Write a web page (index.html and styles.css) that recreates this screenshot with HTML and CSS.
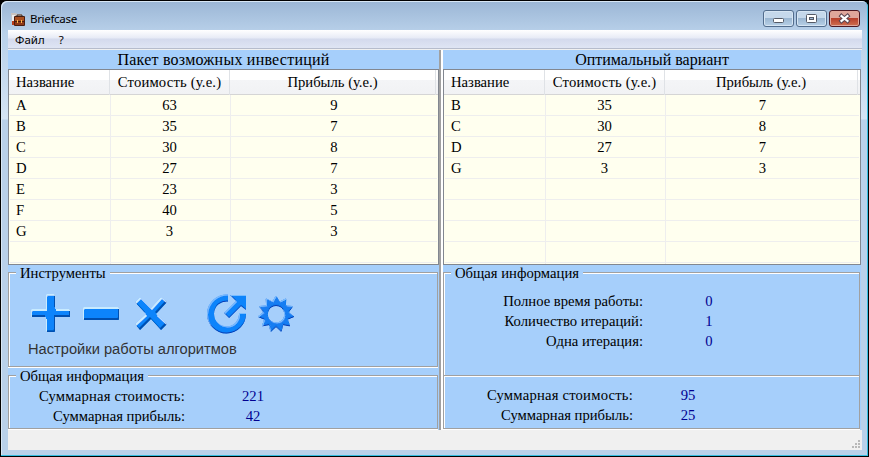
FILE: index.html
```html
<!DOCTYPE html>
<html lang="ru">
<head>
<meta charset="utf-8">
<title>Briefcase</title>
<link rel="stylesheet" href="styles.css">
</head>
<body>
<div class="window">
  <header class="titlebar">
    <svg class="app-icon" width="15" height="15" viewBox="0 0 15 15">
      <path d="M0 1h5l1 1h5v11H1z" fill="#c9c3c0"/><path d="M1 3h3v10H1z" fill="#eee"/><path d="M1 9h3v4H1z" fill="#b83c18"/>
      <rect x="3" y="4" width="11" height="10" rx="1" fill="#4a1d10"/><rect x="4" y="5" width="9" height="4" fill="#a94f20"/>
      <rect x="4" y="10" width="9" height="3" fill="#8e3918"/><path d="M6 5V3h5v2" fill="none" stroke="#352018"/><path d="M6 8h1v3H6zM10 8h1v3h-1z" fill="#ffb64c"/>
    </svg>
    <span class="app-name">Briefcase</span>
    <div class="buttons">
      <span class="button"><svg width="29" height="15" viewBox="0 0 29 15"><rect x="9.5" y="7.5" width="10" height="4" rx="1" fill="#fff" stroke="#555a66"/></svg></span>
      <span class="button"><svg width="29" height="15" viewBox="0 0 29 15"><rect x="9.5" y="3.5" width="10" height="8" rx="1" fill="#fff" stroke="#555a66"/><rect x="12.5" y="6.5" width="4" height="2" fill="#9fb9d6" stroke="#555a66"/></svg></span>
      <span class="button close"><svg width="29" height="15" viewBox="0 0 29 15"><path d="M11.5 5l6 5M17.5 5l-6 5" stroke="#5a4550" stroke-width="4.2" stroke-linecap="square"/><path d="M11.5 5l6 5M17.5 5l-6 5" stroke="#fff" stroke-width="2.2" stroke-linecap="square"/></svg></span>
    </div>
  </header>
  <nav class="menu"><span class="menu-file">Файл</span><span>?</span></nav>
  <main class="panels">
    <section class="panel left">
      <h1 class="caption">Пакет возможных инвестиций</h1>
      <div class="list">
        <div class="row head"><span>Название</span><span>Стоимость (у.е.)</span><span>Прибыль (у.е.)</span></div>
        <div class="row"><span>A</span><span>63</span><span>9</span></div>
        <div class="row"><span>B</span><span>35</span><span>7</span></div>
        <div class="row"><span>C</span><span>30</span><span>8</span></div>
        <div class="row"><span>D</span><span>27</span><span>7</span></div>
        <div class="row"><span>E</span><span>23</span><span>3</span></div>
        <div class="row"><span>F</span><span>40</span><span>5</span></div>
        <div class="row"><span>G</span><span>3</span><span>3</span></div>
        <div class="row"><span></span><span></span><span></span></div>
        <div class="row rest"><span></span><span></span><span></span></div>
      </div>
      <div class="group tools">
        <h2 class="legend">Инструменты</h2>
        <svg class="toolbar" width="275" height="46" viewBox="25 290 275 46">
          <defs>
            <filter id="bevel" x="-20%" y="-20%" width="140%" height="140%">
              <feOffset in="SourceAlpha" dx="0.9" dy="1.7" result="down"/>
              <feComposite in="SourceAlpha" in2="down" operator="out" result="top"/>
              <feFlood flood-color="#c8ebff"/><feComposite in2="top" operator="in" result="light"/>
              <feOffset in="SourceAlpha" dx="-0.9" dy="-1.7" result="up"/>
              <feComposite in="SourceAlpha" in2="up" operator="out" result="bottom"/>
              <feFlood flood-color="#0050b0"/><feComposite in2="bottom" operator="in" result="dark"/>
              <feMerge><feMergeNode in="SourceGraphic"/><feMergeNode in="dark"/><feMergeNode in="light"/></feMerge>
            </filter>
            <filter id="fine-bevel" x="-20%" y="-20%" width="140%" height="140%">
              <feOffset in="SourceAlpha" dx="0.5" dy="0.8" result="down"/>
              <feComposite in="SourceAlpha" in2="down" operator="out" result="top"/>
              <feFlood flood-color="#78bcff"/><feComposite in2="top" operator="in" result="light"/>
              <feOffset in="SourceAlpha" dx="-0.5" dy="-0.9" result="up"/>
              <feComposite in="SourceAlpha" in2="up" operator="out" result="bottom"/>
              <feFlood flood-color="#1238b0"/><feComposite in2="bottom" operator="in" result="dark"/>
              <feMerge><feMergeNode in="SourceGraphic"/><feMergeNode in="dark"/><feMergeNode in="light"/></feMerge>
            </filter>
          </defs>
          <g fill="#0784fb" filter="url(#bevel)">
            <path d="M48 294h7q1 0 1 1v14h14q1 0 1 1v7H56v14q0 1-1 1h-7q-1 0-1-1v-14H32v-7q0-1 1-1h14v-14q0-1 1-1z"/>
            <rect x="84" y="307" width="36" height="13" rx="1"/>
            <path d="M141 297l11 11 10-11 6 5-11 12 11 10-6 6-10-11-11 11-5-6 11-10-11-12z"/>
          </g>
          <g fill="#0784fb" filter="url(#fine-bevel)">
            <path d="M229 294.5v7a12.5 12.5 0 1 0 11 11.500h7a19.500 19.500 0 1 1-18-18.500z"/>
            <path d="M231 295h16v15l-5-4-12 12-5-5 12-12z"/>
          </g>
          <path filter="url(#fine-bevel)" fill="#147df2" stroke="#147df2" stroke-linejoin="round" fill-rule="evenodd" d="M277 296L280.5 302 286.7 298.900 286.400 305.800 293.400 306.500 289.400 312.200 294.800 316.600 288.400 319.200 290.600 325.800 283.800 324.500 282.100 331.300 277 326.500 271.900 331.300 270.200 324.500 263.400 325.800 265.600 319.200 259.200 316.600 264.600 312.200 260.600 306.500 267.600 305.800 267.300 298.900 273.500 302zM277 305.500a8.700 8.700 0 1 0 .1 0z"/>
        </svg>
        <div class="hint">Настройки работы алгоритмов</div>
      </div>
      <div class="group summary">
        <h2 class="legend">Общая информация</h2>
        <dl class="facts"><dt class="cost">Суммарная стоимость:</dt><dd>221</dd><dt>Суммарная прибыль:</dt><dd>42</dd></dl>
      </div>
    </section>
    <div class="splitter"></div>
    <section class="panel right">
      <h1 class="caption">Оптимальный вариант</h1>
      <div class="list">
        <div class="row head"><span>Название</span><span>Стоимость (у.е.)</span><span>Прибыль (у.е.)</span></div>
        <div class="row"><span>B</span><span>35</span><span>7</span></div>
        <div class="row"><span>C</span><span>30</span><span>8</span></div>
        <div class="row"><span>D</span><span>27</span><span>7</span></div>
        <div class="row"><span>G</span><span>3</span><span>3</span></div>
        <div class="row"><span></span><span></span><span></span></div>
        <div class="row"><span></span><span></span><span></span></div>
        <div class="row"><span></span><span></span><span></span></div>
        <div class="row"><span></span><span></span><span></span></div>
        <div class="row rest"><span></span><span></span><span></span></div>
      </div>
      <div class="group result">
        <h2 class="legend">Общая информация</h2>
        <dl class="facts timing"><dt>Полное время работы:</dt><dd>0</dd><dt>Количество итераций:</dt><dd>1</dd><dt>Одна итерация:</dt><dd>0</dd></dl>
        <div class="divider"></div>
        <dl class="facts total"><dt class="cost">Суммарная стоимость:</dt><dd>95</dd><dt>Суммарная прибыль:</dt><dd>25</dd></dl>
      </div>
    </section>
  </main>
  <footer class="status">
    <svg width="8" height="8" viewBox="0 0 8 8"><path d="M6 0h2v2H6zM3 3h2v2H3zM6 3h2v2H6zM0 6h2v2H0zM3 6h2v2H3zM6 6h2v2H6z" fill="#b8b8b8"/></svg>
  </footer>
</div>
</body>
</html>
```
FILE: styles.css
```css
* { box-sizing: border-box; }
body { margin: 0; width: 869px; height: 457px; overflow: hidden; background: #000; color: #000; font: 14.67px/20px "Liberation Serif", serif; }
.window { width: 867px; height: 455px; margin: 1px; padding: 0 6px 5px 7px; display: flex; flex-direction: column; border-radius: 6px 6px 0 0; background: linear-gradient(#9bb6d5, #b9d1ea 32px, #c4d9ef 70px, #d5e4f4 118px, #b9d1ea 119px); box-shadow: inset -1px -1px #35bde0, inset 1px 1px #d8e7f5; }
.titlebar { height: 29px; flex: none; display: flex; align-items: flex-start; font: 12px/18px "Noto Sans", sans-serif; }
.app-icon { margin: 11px 0 0 3px; }
.app-name { margin: 9px 0 0 4px; font-size: 11.6px; letter-spacing: -.35px; }
.buttons { display: flex; gap: 2px; margin: 9px 2px 0 auto; }
.button { width: 31px; height: 17px; border: 1px solid #526c8c; border-radius: 3px; background: linear-gradient(#c5d8eb 48%, #9bb7d2 50%, #b8d0e7); box-shadow: inset 0 0 0 1px #d6e5f3; }
.button svg { display: block; }
.close { border-color: #4c1822; background: linear-gradient(#dfa69b 45%, #b8402c 50%, #cf7050); box-shadow: inset 0 0 0 1px #e0a79b; }
.menu { height: 20px; flex: none; display: flex; gap: 14px; padding-left: 7px; font: 11.5px/19px "Noto Sans", sans-serif; background: linear-gradient(#fff, #e7ebf6 8px, #d4daed 9px, #dfe5f4 18px, #b6bccc 18px, #b6bccc 19px, #f0f0f0 19px); }
.panels { height: 380px; flex: none; display: flex; }
.panel { width: 431px; display: flex; flex-direction: column; background: #a6cffb; }
.right { width: 418px; }
.splitter { width: 4px; background: linear-gradient(90deg, #a0a0a0 50%, #fff 50%); }
.caption { margin: 0; height: 19px; text-align: center; font-size: 16px; font-weight: 400; line-height: 20px; }
.left .caption { letter-spacing: .23px; }
.list { height: 196px; border: 1px solid #828790; padding: 0 1px; background: #ffffef; overflow: hidden; }
.row { height: 21px; display: grid; grid-template-columns: 101px 120px 1fr; border-bottom: 1px solid #eee; }
.row span { border-right: 1px solid #eee; text-align: center; line-height: 20px; }
.row span:nth-child(2) { padding-right: 2px; }
.row span:first-child { text-align: left; padding-left: 6px; }
.row span:last-child { border: 0; }
.rest { height: 1px; border: 0; }
.head { height: 25px; margin: 0 -1px; padding: 0 1px; border-bottom-color: #d5d5d5; background: linear-gradient(#fff 40%, #f4f5f7 42%, #f1f2f4); grid-template-columns: 100px 120px 1fr 1px; }
.row.head span { line-height: 25px; border-right: 1px solid #dfe2e6; }
.row.head span:nth-child(2) { padding: 0; letter-spacing: .18px; }
.group { margin: 7px 1px 0 0; border: 1px solid #a0a0a0; box-shadow: inset 1px 1px #fff, 0 1px #fff; }
.legend { width: fit-content; height: 14px; margin: -7px 0 0 7px; padding: 0 4px; font-size: inherit; font-weight: 400; line-height: 14px; background: #a6cffb; }
.tools { height: 95px; }
.toolbar { display: block; margin: 10px 0 0 15px; }
.hint { margin: 3px 0 0 19px; font: 14.67px/20px "Liberation Sans", sans-serif; color: #333; }
.summary { height: 54px; margin-top: 8px; }
.facts { margin: 3px 0 0; display: grid; grid-template-columns: 176px 1fr; grid-auto-rows: 20px; }
.facts dt { text-align: right; }
.facts .cost { letter-spacing: .2px; }
.facts dd { margin: 0 0 0 38px; width: 60px; text-align: center; color: #000090; }
.result { height: 157px; }
.timing { grid-template-columns: 199px 1fr; margin-top: 11px; }
.timing dd { margin-left: 36px; }
.divider { height: 2px; margin-top: 24px; background: linear-gradient(#a0a0a0 50%, #fff 50%); }
.total { grid-template-columns: 189px 1fr; margin-top: 8px; }
.total dd { margin-left: 25px; }
.status { height: 20px; display: flex; justify-content: flex-end; align-items: flex-end; padding: 0 2px 2px 0; background: #f0f0f0; }
```
